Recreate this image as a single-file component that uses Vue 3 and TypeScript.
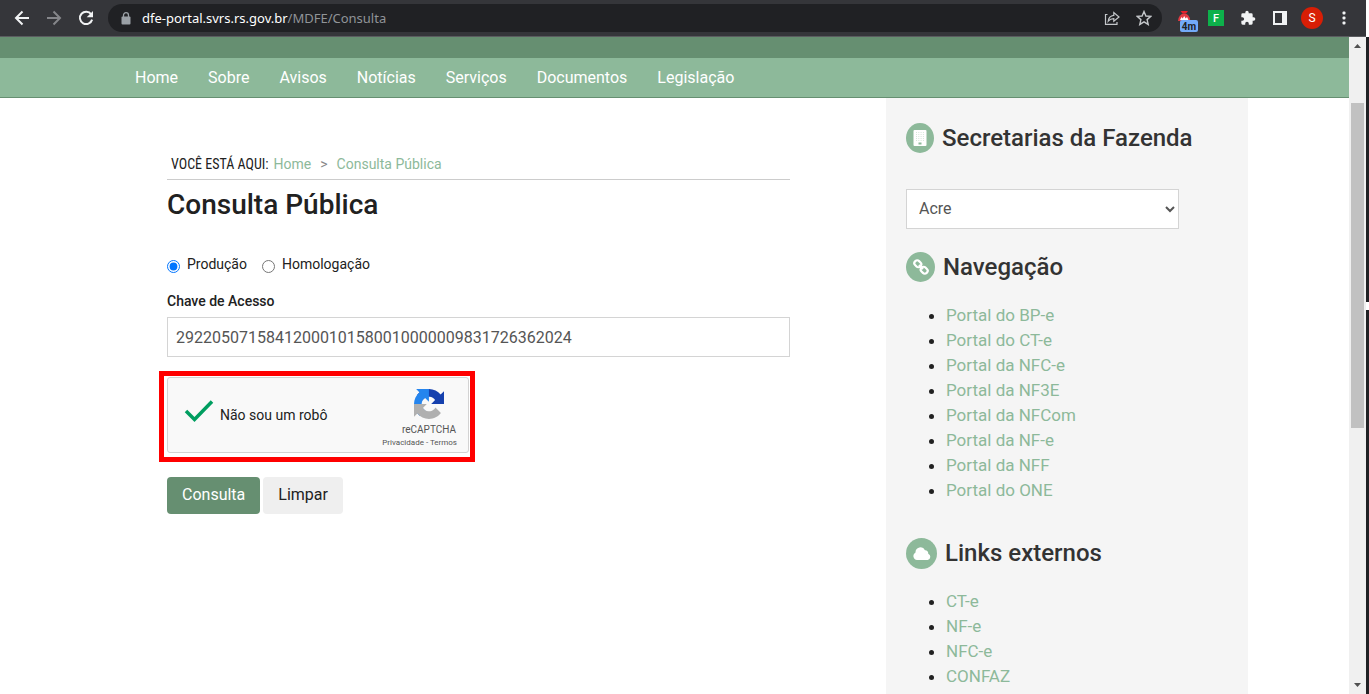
<script setup lang="ts">
import { ref } from 'vue'

const menu: string[] = ['Home', 'Sobre', 'Avisos', 'Notícias', 'Serviços', 'Documentos', 'Legislação']
const portals: string[] = [
  'Portal do BP-e',
  'Portal do CT-e',
  'Portal da NFC-e',
  'Portal da NF3E',
  'Portal da NFCom',
  'Portal da NF-e',
  'Portal da NFF',
  'Portal do ONE',
]
const externals: string[] = ['CT-e', 'NF-e', 'NFC-e', 'CONFAZ']

const ambiente = ref<'producao' | 'homologacao'>('producao')
const chave = ref('29220507158412000101580010000009831726362024')
const estado = ref('Acre')

function limpar(): void {
  chave.value = ''
}
</script>

<template>
  <div class="browser">
    <header class="toolbar">
      <button class="tool" type="button" aria-label="Voltar">
        <svg width="16" height="16" viewBox="0 0 16 16" fill="none" stroke="#f1f3f4" stroke-width="2">
          <path d="M15 8H2.500M8.500 1.500L2 8l6.500 6.500" />
        </svg>
      </button>
      <button class="tool" type="button" aria-label="Avançar">
        <svg width="16" height="16" viewBox="0 0 16 16" fill="none" stroke="#85868a" stroke-width="2">
          <path d="M1 8h12.500M7.500 1.500L14 8l-6.500 6.500" />
        </svg>
      </button>
      <button class="tool" type="button" aria-label="Recarregar">
        <svg width="16" height="16" viewBox="0 0 16 16">
          <path d="M13.200 4.300A6.200 6.200 0 1 0 14.100 9.600" fill="none" stroke="#f1f3f4" stroke-width="2" />
          <path d="M15 1v6.300H8.700z" fill="#f1f3f4" />
        </svg>
      </button>
      <div class="address">
        <svg class="lock" width="10" height="13" viewBox="0 0 10 13">
          <rect x="0.500" y="4.500" width="9" height="8" rx="1" fill="#9aa0a6" />
          <path d="M2.500 5V3.200a2.500 2.500 0 0 1 5 0V5" fill="none" stroke="#9aa0a6" stroke-width="1.300" />
        </svg>
        <span class="url"><b>dfe-portal.svrs.rs.gov.br</b>/MDFE/Consulta</span>
        <button class="tool" type="button" aria-label="Compartilhar">
          <svg width="16" height="16" viewBox="0 0 16 16" fill="none" stroke="#c4c7ca" stroke-width="1.200">
            <path d="M3.500 4.500H1.500v9.800h11.500V12" />
            <path d="M4.200 11.200C4.600 7.500 6.500 5.800 9.800 5.400V2.500L15 7l-5.200 4.300V8.600C7.300 8.600 5.600 9.500 4.200 11.200z" />
          </svg>
        </button>
        <button class="tool" type="button" aria-label="Adicionar aos favoritos">
          <svg width="16" height="16" viewBox="0 0 16 16" fill="none" stroke="#c4c7ca" stroke-width="1.400">
            <path d="M8 1.500l1.900 4.500 4.900.4-3.700 3.200 1.100 4.800L8 11.800l-4.200 2.600 1.100-4.800L1.200 6.400l4.900-.4z" />
          </svg>
        </button>
      </div>
      <div class="extensions">
        <button class="tool wide" type="button" aria-label="Extensão 4m">
          <svg width="20" height="30" viewBox="0 0 20 30">
            <path d="M2.500 8h7.500L8 10.500H4.500z" fill="#e8202a" />
            <path d="M0 18a6.200 7.500 0 0 1 12.400 0z" fill="#e23a42" />
            <path d="M2 17l1.500-3 1.200 1.500L6.200 13l1.500 2.500L9 14l1.500 3z" fill="#fff" />
            <rect x="2" y="17" width="18" height="12" rx="2" fill="#73aaf8" />
            <text x="11" y="27" text-anchor="middle" class="badge-text">4m</text>
          </svg>
        </button>
        <button class="tool letter" type="button">F</button>
        <button class="tool" type="button" aria-label="Extensões">
          <svg width="16" height="16" viewBox="1 0 24 24" fill="#f1f3f4">
            <path d="M21.500 11H20V7a2 2 0 0 0-2-2h-4V3.500a2.500 2.500 0 0 0-5 0V5H5a2 2 0 0 0-2 2v3.800h1.500a2.700 2.700 0 0 1 0 5.400H3V20a2 2 0 0 0 2 2h3.800v-1.500a2.700 2.700 0 0 1 5.400 0V22H18a2 2 0 0 0 2-2v-4h1.500a2.500 2.500 0 0 0 0-5z" />
          </svg>
        </button>
        <button class="tool" type="button" aria-label="Painel lateral">
          <svg width="14" height="14" viewBox="0 0 14 14">
            <path d="M0 0h14v14H0zM2 2v10h7V2z" fill="#f1f3f4" fill-rule="evenodd" />
          </svg>
        </button>
        <button class="avatar" type="button">S</button>
        <button class="tool" type="button" aria-label="Menu">
          <svg width="4" height="14" viewBox="0 0 4 14" fill="#f1f3f4">
            <rect x="0.500" y="0.500" width="3" height="3" rx="1" />
            <rect x="0.500" y="5.500" width="3" height="3" rx="1" />
            <rect x="0.500" y="10.500" width="3" height="3" rx="1" />
          </svg>
        </button>
      </div>
    </header>

    <div class="viewport">
      <div class="page">
        <div class="strip"></div>
        <nav class="menu">
          <div class="container menu-items">
            <a v-for="item in menu" :key="item" href="#">{{ item }}</a>
          </div>
        </nav>
        <div class="container columns">
          <main class="content">
            <div class="crumbs">
              <span class="here">VOCÊ ESTÁ AQUI:</span>
              <a href="#">Home</a>
              <span class="sep">&gt;</span>
              <a href="#">Consulta Pública</a>
            </div>
            <h1>Consulta Pública</h1>
            <form @submit.prevent>
              <div class="radios">
                <label><input v-model="ambiente" type="radio" name="ambiente" value="producao" /><span>Produção</span></label>
                <label><input v-model="ambiente" type="radio" name="ambiente" value="homologacao" /><span>Homologação</span></label>
              </div>
              <label class="field-label" for="chave">Chave de Acesso</label>
              <input id="chave" v-model="chave" class="field" type="text" />
              <div class="captcha">
                <svg class="check" width="30" height="24" viewBox="0 0 30 24">
                  <path d="M2 12l8.500 8.500L28 2.500" fill="none" stroke="#009e60" stroke-width="3.500" />
                </svg>
                <span class="captcha-text">Não sou um robô</span>
                <div class="brand">
                  <svg width="30" height="30" viewBox="0 0 64 64">
                    <path fill="#1540ae" d="M64 31.955l-.033-1.370V4.687l-7.160 7.160C50.948 4.674 42.033.093 32.050.093c-10.400 0-19.622 4.960-25.458 12.640l11.736 11.860a15.550 15.550 0 0 1 4.754-5.334c2.050-1.600 4.952-2.906 8.968-2.906.485 0 .860.057 1.135.163 4.976.393 9.288 3.140 11.828 7.124l-8.307 8.307L64 31.953" />
                    <path fill="#2585ee" d="M31.862.094l-1.370.033H4.594l7.160 7.160C4.580 13.147 0 22.060 0 32.046c0 10.400 4.960 19.622 12.640 25.458L24.500 45.768a15.550 15.550 0 0 1-5.334-4.754c-1.600-2.050-2.906-4.952-2.906-8.968 0-.485.057-.860.163-1.135.393-4.976 3.140-9.288 7.124-11.828l8.307 8.307L31.860.095" />
                    <path fill="#b0b0b0" d="M.001 32.045l.033 1.370v25.898l7.160-7.160c5.860 7.173 14.774 11.754 24.760 11.754 10.400 0 19.622-4.960 25.458-12.640l-11.736-11.860a15.550 15.550 0 0 1-4.754 5.334c-2.050 1.600-4.952 2.906-8.968 2.906-.485 0-.860-.057-1.135-.163-4.976-.393-9.288-3.140-11.828-7.124l8.307-8.307c-10.522.040-22.400.066-27.295-.005" />
                  </svg>
                  <span class="brand-name">reCAPTCHA</span>
                </div>
                <div class="terms"><a href="#">Privacidade</a> - <a href="#">Termos</a></div>
                <div class="marker"></div>
              </div>
              <div class="actions">
                <button class="btn primary" type="submit">Consulta</button>
                <button class="btn" type="button" @click="limpar">Limpar</button>
              </div>
            </form>
          </main>

          <aside class="sidebar">
            <h2 id="secretarias">
              <span class="disc narrow">
                <svg width="14" height="16" viewBox="0 0 14 16">
                  <rect x="0.500" width="13" height="16" rx="1" fill="#fff" />
                  <path d="M3 2.500h8M3 4.500h8M3 6.500h8M3 8.500h8M3 10.500h8" stroke="#d5e8da" stroke-dasharray="1 1.300" />
                  <rect x="5.500" y="12.500" width="3" height="2" fill="#8db99a" />
                </svg>
              </span>
              Secretarias da Fazenda
            </h2>
            <select v-model="estado" aria-labelledby="secretarias">
              <option>Acre</option>
            </select>
            <h2>
              <span class="disc">
                <svg width="16" height="16" viewBox="0 0 16 16" fill="none" stroke="#fff" stroke-width="2.200">
                  <rect x="-3.600" y="-2.800" width="7.200" height="5.600" rx="2.600" transform="translate(4.800 4.800) rotate(45)" />
                  <rect x="-3.600" y="-2.800" width="7.200" height="5.600" rx="2.600" transform="translate(11.200 11.200) rotate(45)" />
                  <path d="M6 6l4 4" />
                </svg>
              </span>
              Navegação
            </h2>
            <ul>
              <li v-for="p in portals" :key="p"><a href="#">{{ p }}</a></li>
            </ul>
            <h2>
              <span class="disc large">
                <svg width="18" height="13" viewBox="0 0 18 13" fill="#fff">
                  <path d="M4 13a4 4 0 0 1-1.500-7.500A5 5 0 0 1 12 3.200a3 3 0 0 1 3.200 3.500A3.300 3.300 0 0 1 14.700 13z" />
                </svg>
              </span>
              Links externos
            </h2>
            <ul>
              <li v-for="e in externals" :key="e"><a href="#">{{ e }}</a></li>
            </ul>
          </aside>
        </div>
      </div>
      <div class="scrollbar">
        <svg width="7" height="4" viewBox="0 0 7 4"><path d="M0 4L3.500 0 7 4z" fill="#505050" /></svg>
        <div class="track"><div class="thumb"></div></div>
        <svg width="7" height="4" viewBox="0 0 7 4"><path d="M0 0h7L3.500 4z" fill="#505050" /></svg>
      </div>
      <div class="edge"><i></i></div>
    </div>
  </div>
</template>

<style>
body {
  margin: 0;
}
</style>

<style scoped>
.browser {
  display: flex;
  flex-direction: column;
  height: 100vh;
  overflow: hidden;
  font-family: Roboto, 'Liberation Sans', sans-serif;
  font-size: 14px;
  color: #212121;
  background: #fff;
}
.browser * {
  box-sizing: border-box;
}
a {
  text-decoration: none;
  color: #8db99a;
}
button {
  font: inherit;
  cursor: pointer;
}

/* browser toolbar */
.toolbar {
  display: flex;
  align-items: center;
  flex: none;
  height: 37px;
  margin-right: 3px;
  padding: 0 14px;
  gap: 16px;
  background: #35363a;
  border-bottom: 1px solid #5b5c60;
}
.tool {
  display: flex;
  align-items: center;
  justify-content: center;
  flex: none;
  width: 16px;
  height: 16px;
  padding: 0;
  border: 0;
  background: none;
}
.address {
  display: flex;
  align-items: center;
  flex: 1;
  height: 28px;
  margin-left: -2px;
  padding: 0 10px 0 13px;
  gap: 16px;
  border-radius: 14px;
  background: #202124;
}
.lock {
  flex: none;
}
.url {
  flex: 1;
  margin-left: -5px;
  font-family: 'Noto Sans', 'Open Sans', sans-serif;
  font-size: 13px;
  color: #909498;
}
.url b {
  font-weight: 400;
  color: #fff;
}
.extensions {
  display: flex;
  align-items: center;
  gap: 16px;
}
.wide {
  width: 20px;
  height: 30px;
}
.badge-text {
  font: 700 10px Roboto, sans-serif;
  fill: #202124;
}
.letter {
  margin-left: -6px;
  background: #0db14b;
  color: #fff;
  font-size: 11px;
  font-weight: 500;
}
.avatar {
  width: 22px;
  height: 22px;
  margin: 0 -3px;
  padding: 0;
  border: 0;
  border-radius: 50%;
  background: #d81e05;
  color: #fff;
  font-size: 12px;
}

/* page */
.viewport {
  display: flex;
  flex: 1;
  min-height: 0;
}
.page {
  display: flex;
  flex-direction: column;
  flex: 1;
  min-width: 0;
}
.strip {
  flex: none;
  height: 21px;
  background: #668f71;
}
.menu {
  flex: none;
  background: #8db99a;
  border-bottom: 1px solid #668f71;
}
.container {
  width: 100%;
  max-width: 1147px;
  margin: 0 auto;
}
.menu-items {
  display: flex;
  gap: 30px;
  padding-left: 34px;
}
.menu a {
  font-size: 16px;
  line-height: 39px;
  color: #fff;
}
.columns {
  display: grid;
  grid-template-columns: 1fr 362px;
  flex: 1;
}
.content {
  padding: 54px 96px 0 66px;
}
.crumbs {
  display: flex;
  height: 28px;
  padding-left: 4px;
  line-height: 24px;
  border-bottom: 1px solid #ccc;
}
.here {
  margin-right: 5px;
  font-family: 'Roboto Condensed', 'Liberation Sans Narrow', 'Liberation Sans', sans-serif;
}
.sep {
  margin: 0 9px;
  color: #888;
}
h1 {
  margin: 8px 0 32px;
  font-size: 28px;
  line-height: 34px;
  font-weight: 500;
}
.radios {
  display: flex;
  gap: 15px;
  line-height: 20px;
}
.radios label {
  display: flex;
  gap: 7px;
}
.radios input {
  width: 13px;
  height: 13px;
  margin: 6px 0 0;
}
.field-label {
  display: block;
  margin: 17px 0 6px;
  line-height: 20px;
  font-weight: 500;
}
.field {
  display: block;
  width: 100%;
  height: 40px;
  padding: 0 8px;
  border: 1px solid #d4d4d4;
  border-radius: 0;
  font: 16px Roboto, sans-serif;
  color: #555;
}
.captcha {
  position: relative;
  display: grid;
  grid-template-columns: 30px 1fr 80px;
  width: 302px;
  height: 76px;
  margin-top: 20px;
  padding: 9px 13px 0 16px;
  column-gap: 6px;
  border: 1px solid #d3d3d3;
  border-radius: 3px;
  background: #f9f9f9;
}
.check {
  margin-top: 12px;
}
.captcha-text {
  line-height: 56px;
}
.brand {
  display: flex;
  flex-direction: column;
  align-items: center;
  margin-left: 28px;
  padding-top: 2px;
}
.brand svg {
  flex: none;
}
.brand-name {
  font-size: 10px;
  line-height: 22px;
  color: #555;
}
.terms {
  position: absolute;
  right: 11px;
  bottom: 4px;
  font-size: 8px;
  line-height: 11px;
  color: #555;
}
.terms a {
  color: #555;
}
.marker {
  position: absolute;
  inset: -7px -7px -10px -9px;
  border: 5px solid #f00;
  pointer-events: none;
}
.actions {
  display: flex;
  gap: 3px;
  margin-top: 24px;
}
.btn {
  height: 37px;
  padding: 0 15px 2px;
  border: 0;
  border-radius: 4px;
  font-size: 16px;
  background: #efefef;
  color: #212121;
}
.primary {
  background: #668f71;
  color: #fff;
}

/* sidebar */
.sidebar {
  padding: 24px 20px 0;
  background: #f5f5f5;
}
h2 {
  display: flex;
  align-items: center;
  gap: 8px;
  height: 32px;
  margin: 0;
  font-size: 24px;
  font-weight: 500;
  color: #333;
}
.disc {
  display: flex;
  align-items: center;
  justify-content: center;
  width: 29px;
  height: 30px;
  border-radius: 50%;
  background: #8db99a;
}
.narrow {
  width: 28px;
}
.large {
  width: 31px;
  height: 31px;
}
select {
  display: block;
  width: 273px;
  height: 40px;
  margin: 35px 0 22px;
  padding: 0 0 2px 8px;
  border: 1px solid #d4d4d4;
  border-radius: 0;
  background: #fff;
  font: 16px Roboto, sans-serif;
  color: #555;
}
ul {
  margin: 20px 0 34px;
  padding-left: 40px;
  font-size: 17px;
  line-height: 25px;
}

/* window scrollbar and edge */
.scrollbar {
  display: flex;
  flex-direction: column;
  align-items: center;
  flex: none;
  width: 17px;
  padding: 7px 0;
  background: #f0f0f0;
}
.track {
  flex: 1;
  width: 13px;
  padding-top: 55px;
}
.thumb {
  height: 56%;
  background: #c1c1c1;
}
.edge {
  flex: none;
  width: 3px;
  padding-top: 265px;
  background: #202124;
}
.edge i {
  display: block;
  height: 8px;
  background: #fff;
}
</style>
